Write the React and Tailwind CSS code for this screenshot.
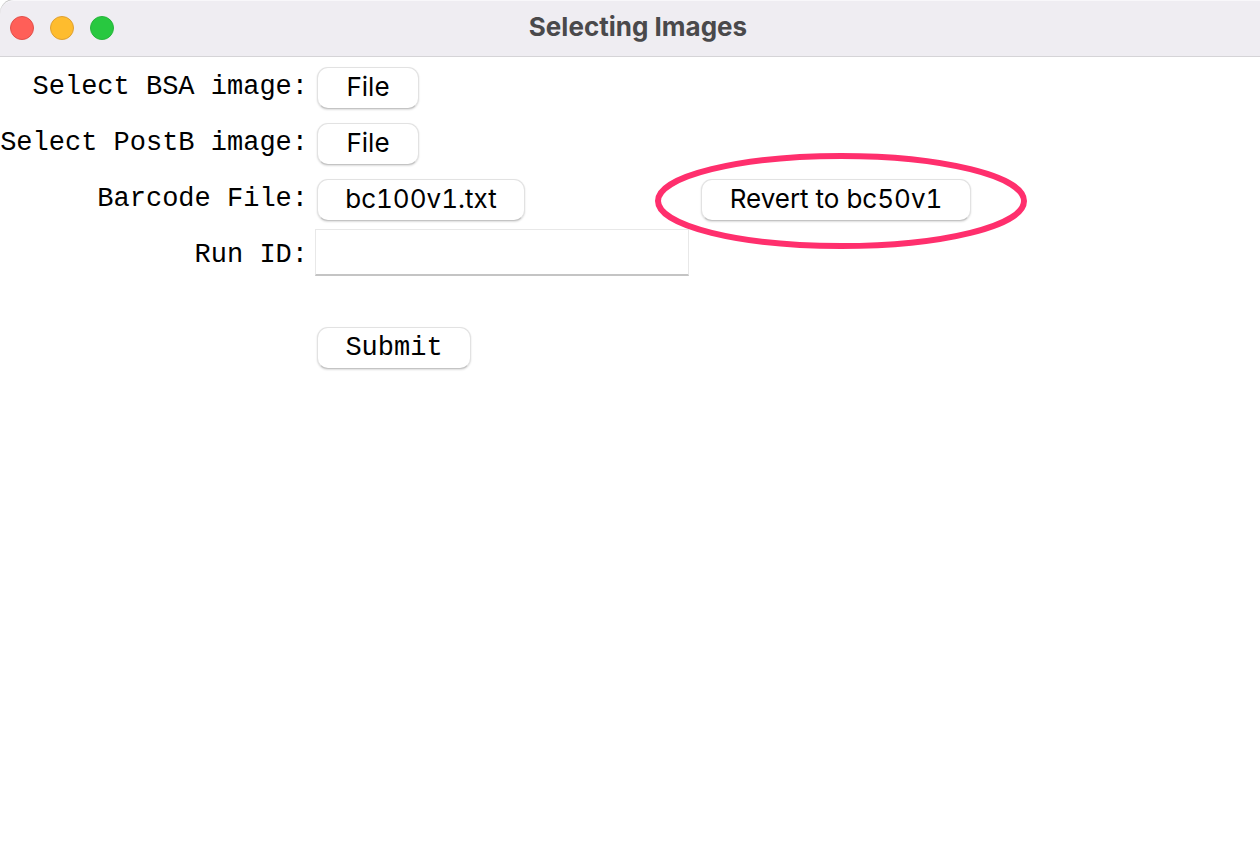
const buttonBase =
  "flex h-[42px] items-center justify-center whitespace-nowrap rounded-[11px] border border-[#e2e2e2] border-b-[#c4c4c4] bg-white text-black shadow-[0_1px_2px_rgba(0,0,0,0.14)]";
const sans = "pb-0.5 font-['Inter',sans-serif] text-[26px] leading-8 tabular-nums";
const mono = "font-['Liberation_Mono',monospace] text-[27px] leading-8";

function PushButton({ className, ...props }) {
  return <button type="button" className={`${buttonBase} ${className}`} {...props} />;
}

function Row({ label, htmlFor, children }) {
  return (
    <div className="flex h-14 items-center">
      <label
        htmlFor={htmlFor}
        className={`${mono} w-[308px] shrink-0 whitespace-nowrap pb-0.5 text-right text-black`}
      >
        {label}
      </label>
      {children}
    </div>
  );
}

function TitleBar() {
  return (
    <header className="grid h-[57px] grid-cols-[1fr_auto_1fr] items-center rounded-tl-[14px] border-b border-t border-b-[#d5d4d7] border-t-[#f8f7fa] bg-[#efedf2] px-2.5 pb-0.5 shadow-[0_-1px_0_#c4c4c4]">
      <div className="flex gap-4">
        <button type="button" aria-label="Close" className="size-6 rounded-full border border-[#e2504a] bg-[#ff5f58]" />
        <button type="button" aria-label="Minimize" className="size-6 rounded-full border border-[#dfa032] bg-[#febc2e]" />
        <button type="button" aria-label="Zoom" className="size-6 rounded-full border border-[#27b53c] bg-[#28c840]" />
      </div>
      <h1 className="pb-0.5 pl-4 font-['Inter',sans-serif] text-[26px] font-bold leading-8 text-[#4a494b]">
        Selecting Images
      </h1>
    </header>
  );
}

export default function App() {
  return (
    <main className="min-h-screen bg-white">
      <TitleBar />
      <form className="pt-[3px]" onSubmit={(e) => e.preventDefault()}>
        <Row label="Select BSA image:" htmlFor="bsa">
          <PushButton id="bsa" className={`${sans} ml-[9px] w-[102px]`}>File</PushButton>
        </Row>
        <Row label="Select PostB image:" htmlFor="postb">
          <PushButton id="postb" className={`${sans} ml-[9px] w-[102px]`}>File</PushButton>
        </Row>
        <Row label="Barcode File:" htmlFor="barcode">
          <div className="w-[393px] shrink-0 pl-[9px]">
            <PushButton id="barcode" className={`${sans} w-[208px]`}>bc100v1.txt</PushButton>
          </div>
          <div className="relative">
            <PushButton className={`${sans} w-[270px]`}>Revert to bc50v1</PushButton>
            <svg
              aria-hidden="true"
              className="pointer-events-none absolute -left-12 -top-[27px] h-[98px] w-[376px]"
              viewBox="0 0 376 98"
              fill="none"
            >
              <ellipse cx="188" cy="49" rx="183" ry="45" stroke="#ff2f6d" strokeWidth="6" />
            </svg>
          </div>
        </Row>
        <Row label="Run ID:" htmlFor="run-id">
          <input
            id="run-id"
            type="text"
            className={`${mono} mb-2 ml-[7px] h-[47px] w-[374px] border border-[#e8e8e8] border-b-2 border-b-[#c4c4c4] bg-white px-2 text-black outline-none`}
          />
        </Row>
        <div className="pl-[317px] pt-[43px]">
          <button type="submit" className={`${buttonBase} ${mono} w-[154px]`}>Submit</button>
        </div>
      </form>
    </main>
  );
}
